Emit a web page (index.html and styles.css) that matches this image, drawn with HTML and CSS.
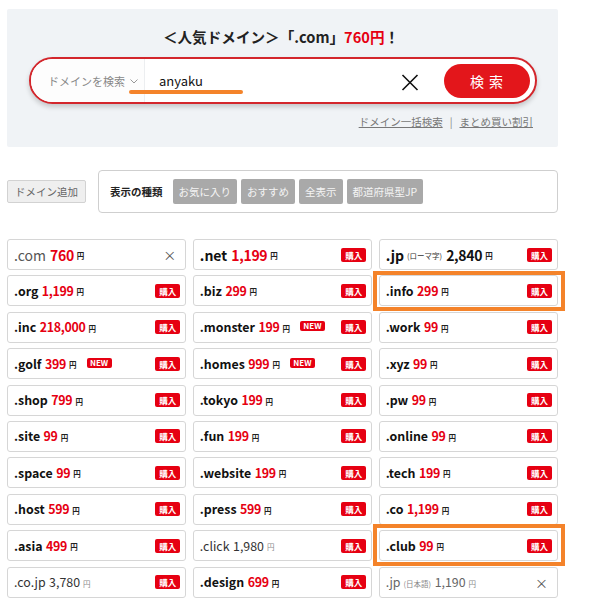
FILE: index.html
```html
<!DOCTYPE html>
<html lang="ja">
<head>
<meta charset="utf-8">
<title>ドメイン検索</title>
<link rel="stylesheet" href="styles.css">
</head>
<body>
<div class="page">
  <section class="hero">
    <h1 class="hero-title">＜人気ドメイン＞「.com」<span class="red">760円</span>！</h1>
    <div class="search">
      <div class="search-type">ドメインを検索<svg class="chev" width="8" height="5" viewBox="0 0 8 5"><path d="M0.5 0.5 L4 4 L7.5 0.5" fill="none" stroke="#999" stroke-width="1"/></svg></div>
      <div class="search-input">anyaku</div>
      <svg class="clear" width="18" height="17" viewBox="0 0 18 17"><path d="M1.5 1 L16.5 16 M16.5 1 L1.5 16" stroke="#111" stroke-width="1.6" fill="none"/></svg>
      <button class="search-btn">検 索</button>
      <span class="mark"></span>
    </div>
    <div class="links"><a href="#">ドメイン一括検索</a><span class="sep">|</span><a href="#">まとめ買い割引</a></div>
  </section>

  <div class="toolbar">
    <button class="add-btn">ドメイン追加</button>
    <div class="filter">
      <span class="filter-label">表示の種類</span>
      <button class="chip">お気に入り</button>
      <button class="chip">おすすめ</button>
      <button class="chip">全表示</button>
      <button class="chip">都道府県型JP</button>
    </div>
  </div>

  <div class="grid">
    <div class="cell big"><span class="dom light">.com</span><span class="price">760</span><span class="yen">円</span><span class="x">×</span></div>
    <div class="cell big"><span class="dom">.net</span><span class="price">1,199</span><span class="yen">円</span><span class="buy">購入</span></div>
    <div class="cell big"><span class="dom">.jp</span><span class="note">(ローマ字)</span><span class="price black">2,840</span><span class="yen">円</span><span class="buy">購入</span></div>

    <div class="cell"><span class="dom">.org</span><span class="price">1,199</span><span class="yen">円</span><span class="buy">購入</span></div>
    <div class="cell"><span class="dom">.biz</span><span class="price">299</span><span class="yen">円</span><span class="buy">購入</span></div>
    <div class="cell"><span class="dom">.info</span><span class="price">299</span><span class="yen">円</span><span class="buy">購入</span><span class="hl"></span></div>

    <div class="cell"><span class="dom">.inc</span><span class="price">218,000</span><span class="yen">円</span><span class="buy">購入</span></div>
    <div class="cell"><span class="dom">.monster</span><span class="price">199</span><span class="yen">円</span><span class="new">NEW</span><span class="buy">購入</span></div>
    <div class="cell"><span class="dom">.work</span><span class="price">99</span><span class="yen">円</span><span class="buy">購入</span></div>

    <div class="cell"><span class="dom">.golf</span><span class="price">399</span><span class="yen">円</span><span class="new">NEW</span><span class="buy">購入</span></div>
    <div class="cell"><span class="dom">.homes</span><span class="price">999</span><span class="yen">円</span><span class="new">NEW</span><span class="buy">購入</span></div>
    <div class="cell"><span class="dom">.xyz</span><span class="price">99</span><span class="yen">円</span><span class="buy">購入</span></div>

    <div class="cell"><span class="dom">.shop</span><span class="price">799</span><span class="yen">円</span><span class="buy">購入</span></div>
    <div class="cell"><span class="dom">.tokyo</span><span class="price">199</span><span class="yen">円</span><span class="buy">購入</span></div>
    <div class="cell"><span class="dom">.pw</span><span class="price">99</span><span class="yen">円</span><span class="buy">購入</span></div>

    <div class="cell"><span class="dom">.site</span><span class="price">99</span><span class="yen">円</span><span class="buy">購入</span></div>
    <div class="cell"><span class="dom">.fun</span><span class="price">199</span><span class="yen">円</span><span class="buy">購入</span></div>
    <div class="cell"><span class="dom">.online</span><span class="price">99</span><span class="yen">円</span><span class="buy">購入</span></div>

    <div class="cell"><span class="dom">.space</span><span class="price">99</span><span class="yen">円</span><span class="buy">購入</span></div>
    <div class="cell"><span class="dom">.website</span><span class="price">199</span><span class="yen">円</span><span class="buy">購入</span></div>
    <div class="cell"><span class="dom">.tech</span><span class="price">199</span><span class="yen">円</span><span class="buy">購入</span></div>

    <div class="cell"><span class="dom">.host</span><span class="price">599</span><span class="yen">円</span><span class="buy">購入</span></div>
    <div class="cell"><span class="dom">.press</span><span class="price">599</span><span class="yen">円</span><span class="buy">購入</span></div>
    <div class="cell"><span class="dom">.co</span><span class="price">1,199</span><span class="yen">円</span><span class="buy">購入</span></div>

    <div class="cell"><span class="dom">.asia</span><span class="price">499</span><span class="yen">円</span><span class="buy">購入</span></div>
    <div class="cell plain"><span class="dom">.click</span><span class="price">1,980</span><span class="yen">円</span><span class="buy">購入</span></div>
    <div class="cell"><span class="dom">.club</span><span class="price">99</span><span class="yen">円</span><span class="buy">購入</span><span class="hl hl2"></span></div>

    <div class="cell plain"><span class="dom">.co.jp</span><span class="price">3,780</span><span class="yen">円</span><span class="buy">購入</span></div>
    <div class="cell"><span class="dom">.design</span><span class="price">699</span><span class="yen">円</span><span class="buy">購入</span></div>
    <div class="cell plain grey"><span class="dom">.jp</span><span class="note">(日本語)</span><span class="price">1,190</span><span class="yen">円</span><span class="x">×</span></div>
  </div>
</div>
</body>
</html>
```

FILE: styles.css
```css
* { box-sizing: border-box; }
html, body { margin: 0; padding: 0; background: #fff; }
body {
  font-family: "Noto Sans CJK JP", "Noto Sans", sans-serif;
  color: #222;
  width: 600px;
}
button { font-family: inherit; cursor: pointer; }

.page { padding: 9px 42px 0 7px; }

/* hero */
.hero {
  height: 138px;
  background: #f0f3f6;
  border-radius: 2px;
  padding: 18px 21px 0 22px;
}
.hero-title {
  margin: 0;
  height: 20px;
  line-height: 20px;
  font-size: 14.6px;
  font-weight: 700;
  text-align: center;
  color: #222;
  padding-right: 4px;
}
.red { color: #e60012; }

.search {
  position: relative;
  margin-top: 10px;
  height: 47px;
  display: flex;
  align-items: center;
  background: #fff;
  border: 2px solid #d3262c;
  border-radius: 24px;
  box-shadow: 0 3px 5px rgba(0, 0, 0, 0.18);
}
.search-type {
  width: 114px;
  height: 100%;
  padding-left: 17px;
  display: flex;
  align-items: center;
  font-size: 11px;
  color: #888;
  border-right: 1px solid #eceef0;
  border-radius: 22px 0 0 22px;
  background: #fdfdfd;
}
.chev { margin-left: 5px; margin-top: 2px; }
.search-input {
  flex: 1;
  padding-left: 14px;
  font-size: 13px;
  color: #111;
  line-height: 18px;
}
.clear { margin-right: 25px; margin-top: 3px; }
.search-btn {
  width: 86px;
  height: 34px;
  margin-right: 5px;
  border: 0;
  border-radius: 17px;
  background: #e3161b;
  color: #fff;
  font-size: 14px;
  letter-spacing: 1px;
  padding: 0;
}
.mark {
  position: absolute;
  left: 98px;
  top: 31px;
  width: 114px;
  height: 4px;
  border-radius: 2px;
  background: #f4832a;
}
.links {
  margin-top: 11px;
  padding-right: 4px;
  text-align: right;
  font-size: 10.5px;
  line-height: 14px;
  color: #777;
}
.links a { color: #777; text-decoration: underline; }
.sep { margin: 0 7px; color: #888; }

/* toolbar */
.toolbar {
  margin-top: 23px;
  display: flex;
  align-items: center;
}
.add-btn {
  width: 79px;
  height: 23px;
  padding: 0;
  font-size: 10.5px;
  color: #666;
  background: #efefef;
  border: 1px solid #d2d2d2;
  border-radius: 2px;
}
.filter {
  flex: 1;
  margin-left: 12px;
  height: 43px;
  border: 1px solid #cfcfcf;
  border-radius: 4px;
  display: flex;
  align-items: center;
  padding-left: 11px;
  gap: 4px;
}
.filter-label {
  font-size: 10.5px;
  font-weight: 700;
  color: #222;
  margin-right: 6px;
}
.chip {
  height: 25px;
  padding: 0 6px;
  border: 0;
  border-radius: 2px;
  background: #a9a9a9;
  color: #f4f4f4;
  font-size: 10.5px;
}

/* grid */
.grid {
  margin-top: 26px;
  display: grid;
  grid-template-columns: repeat(3, 1fr);
  grid-auto-rows: 31px;
  column-gap: 6.5px;
  row-gap: 5.4px;
}
.cell {
  position: relative;
  display: flex;
  align-items: center;
  padding: 0 5px 0 6px;
  border: 1px solid #d6d6d6;
  border-radius: 3px;
  background: #fff;
  white-space: nowrap;
}
.dom {
  font-size: 12.4px;
  font-weight: 700;
  color: #111;
}
.price {
  margin-left: 3.5px;
  font-size: 12.4px;
  font-weight: 700;
  color: #e60012;
  letter-spacing: -0.3px;
}
.price.black { color: #111; }
.yen {
  margin-left: 3px;
  margin-top: 2px;
  font-size: 7.5px;
  font-weight: 700;
  color: #222;
}
.note {
  margin-left: 3px;
  margin-top: 2px;
  font-size: 7.5px;
  color: #333;
}
.buy {
  margin-left: auto;
  width: 25px;
  height: 14px;
  line-height: 14px;
  text-align: center;
  background: #e60012;
  color: #fff;
  font-size: 8.5px;
  font-weight: 700;
  border-radius: 2px;
}
.new {
  margin-left: 10px;
  width: 25px;
  height: 10px;
  line-height: 10px;
  text-align: center;
  background: #e60012;
  color: #fff;
  font-size: 8px;
  font-weight: 700;
  border-radius: 2px;
  margin-top: -2px;
}
.x {
  margin-left: auto;
  margin-right: 4px;
  font-size: 13px;
  color: #555;
}

.cell.big .dom { font-size: 14px; }
.cell.big .price { font-size: 14px; margin-left: 4px; }
.cell.big .dom.light { font-weight: 400; color: #555; }

.cell.plain .dom,
.cell.plain .price { font-weight: 400; color: #333; letter-spacing: 0; }
.cell.plain .yen { font-weight: 400; color: #888; }
.cell.plain.grey .dom,
.cell.plain.grey .price { color: #666; }
.cell.plain.grey .note { color: #888; }

.hl {
  position: absolute;
  left: -7px;
  right: -8px;
  top: -5px;
  bottom: -6px;
  border: 4px solid #f4832a;
  pointer-events: none;
}
.hl2 { top: -7px; bottom: -6px; }
```
